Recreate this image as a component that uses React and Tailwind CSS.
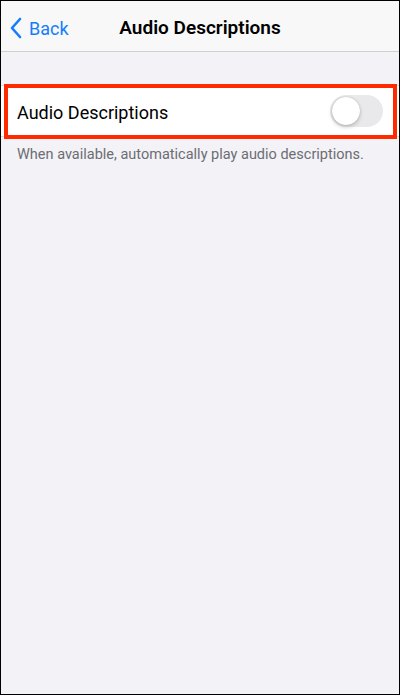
import { useState } from 'react';

const App = () => {
  const [enabled, setEnabled] = useState(false);

  return (
    <div className="w-[400px] h-[695px] border border-black bg-[#f2f2f7] flex flex-col font-['Roboto',sans-serif] overflow-hidden">
      {/* Nav bar */}
      <header className="h-[51px] shrink-0 bg-[#f8f8f8] border-b border-[#cfcfd3] grid grid-cols-[1fr_auto_1fr] items-center pt-[4px]">
        <button className="flex items-center pl-[8px] text-[#147efb] text-[18px]">
          <svg width="14" height="22" viewBox="0 0 14 22" className="mr-[6px]">
            <path d="M11 2 L3 11 L11 20" fill="none" stroke="currentColor" strokeWidth="2.6" strokeLinecap="round" strokeLinejoin="round" />
          </svg>
          Back
        </button>
        <h1 className="text-[19px] font-semibold text-black">Audio Descriptions</h1>
        <div />
      </header>

      {/* Setting row */}
      <div className="mt-[33px] relative">
        <div className="h-[52px] bg-white border-y border-[#dcdce0] flex items-center justify-between pl-[16px] pr-[16px]">
          <span className="text-[18px] text-black pt-[3px]">Audio Descriptions</span>
          <button
            onClick={() => setEnabled(!enabled)}
            className={`w-[53px] h-[32px] rounded-full p-[2px] flex ${enabled ? 'bg-[#34c759] justify-end' : 'bg-[#e9e9eb] justify-start'}`}
          >
            <span className="w-[28px] h-[28px] rounded-full bg-white shadow-[0_2px_4px_rgba(0,0,0,0.2),0_0_1px_rgba(0,0,0,0.3)]" />
          </button>
        </div>
        {/* annotation highlight */}
        <div className="absolute left-[3px] right-[2px] top-[-1px] bottom-[-2px] border-[4px] border-[#ff2a00] pointer-events-none" />
      </div>
      <p className="px-[16px] pt-[7px] text-[14.5px] text-[#6d6d72]">
        When available, automatically play audio descriptions.
      </p>
    </div>
  );
};

export default App;
